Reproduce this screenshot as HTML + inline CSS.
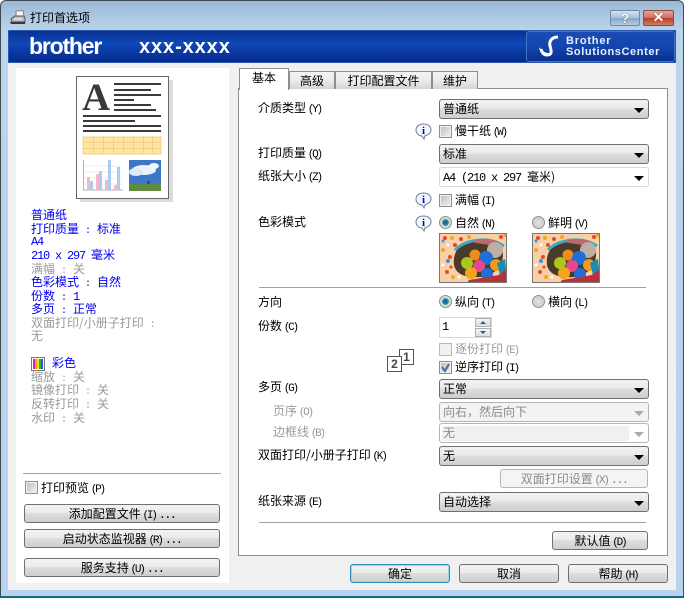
<!DOCTYPE html>
<html lang="zh"><head><meta charset="utf-8"><style>
html,body{margin:0;padding:0;background:#fff}
#w{position:relative;width:684px;height:598px;overflow:hidden;font-family:"WenQuanYi Zen Hei","Noto Sans CJK SC","Liberation Sans",sans-serif;font-size:12px;color:#000;background:#fff}
#w div,#w svg{position:absolute}
.t{white-space:nowrap;line-height:14px;height:14px}
.g{color:#9a9a9a}.b{color:#0000f0}
.k{font-family:"Liberation Mono",monospace;font-size:12px;letter-spacing:-1.2px}
.m{font-family:"Liberation Mono",monospace;font-size:11px;letter-spacing:-2.2px;margin-left:-1px}
.p{font-family:"Liberation Mono",monospace;font-size:10px;letter-spacing:0}
.dt{font-family:"Liberation Mono",monospace;font-size:12px;letter-spacing:-1.700px;margin-left:3px}
.c{height:18px;border:1px solid #707070;border-radius:3px;background:linear-gradient(#f2f2f2 0,#ebebeb 45%,#dddddd 50%,#cfcfcf 100%);box-sizing:content-box;width:208px;left:439px}
.c i{position:absolute;right:4px;top:8px;width:0;height:0;border:5px solid transparent;border-top:5px solid #000;border-bottom:0}
.c>span{position:absolute;left:3px;top:2px;line-height:14px;white-space:nowrap}
.c.d{border-color:#b5b5b5;background:#f3f3f3;color:#8a8a8a}.c.d i{border-top-color:#aaa}
.bt{border:1px solid #707070;border-radius:3px;background:linear-gradient(#f2f2f2 0,#ebebeb 45%,#dddddd 50%,#cfcfcf 100%);text-align:center;line-height:17px;white-space:nowrap;box-sizing:border-box}
.cb{width:13px;height:13px;box-sizing:border-box;border:1px solid #8e8f8f;background:linear-gradient(135deg,#bdbdbd,#f2f2f2);box-shadow:inset 0 0 0 1px #f0f0f0}
.r{width:13px;height:13px;box-sizing:border-box;border:1px solid #8e8f8f;border-radius:50%;background:radial-gradient(circle at 50% 50%,#e4e4e4,#cfcfcf 60%,#f4f4f4)}
.r.on{background:radial-gradient(circle,#0e5a80 0,#2a8fb0 40%,#dcdcdc 46%,#cfcfcf 100%)}
.tb{background:linear-gradient(#f4f4f4,#ebebeb 50%,#d4d4d4);border:1px solid #8e8f8f;border-bottom:0;box-sizing:border-box;text-align:center;line-height:17px;white-space:nowrap}
.hr{height:1px;background:#a0a0a0}
</style></head><body><div id="w">
<div style="left:0;top:0;width:684px;height:598px;box-sizing:border-box;border:1px solid #3d4a52;border-radius:6px 6px 0 0;border-bottom:2px solid #0d6f84;background:linear-gradient(#9cb9d6 0,#bcd4ec 30px,#b9d3ee 100%)"></div>
<div style="left:8px;top:30px;width:668px;height:560px;background:#f0f0f0"></div>

<svg style="left:9px;top:10px" width="18" height="16" viewBox="0 0 18 16"><path d="M7 1l7-.5 1 6-8 .5z" fill="#f4f4f4" stroke="#888"/><path d="M2 9l4-3h9l1 3v3H3z" fill="#b8b8b8" stroke="#555"/><path d="M1 12h15v2H2z" fill="#3a3a3a"/><path d="M5 9h8" stroke="#fff"/></svg>
<div class="t" style="left:30px;top:11px">打印首选项</div>
<div style="left:610px;top:10px;width:30px;height:16px;box-sizing:border-box;border:1px solid #6f8aa5;border-radius:2px;background:linear-gradient(#d5e3f1,#a9c2dc 48%,#86a6c6 52%,#b4cbe1);color:#fff;text-align:center;font:bold 14px/14px 'Liberation Sans',sans-serif;text-shadow:0 0 1px #222">?</div>
<div style="left:643px;top:10px;width:31px;height:16px;box-sizing:border-box;border:1px solid #8a4a40;border-radius:2px;background:linear-gradient(#e0a59a,#d0705f 48%,#b73f2c 52%,#d77a63);color:#fff;text-align:center;font:bold 14px/13px 'Liberation Sans',sans-serif;text-shadow:0 0 1px #422">✕</div>

<div style="left:8px;top:30px;width:668px;height:33px;box-sizing:border-box;border:1px solid #2a5ab0;background:linear-gradient(#0a3090 0,#0f49b8 40%,#0a3aa4 65%,#082a8c 100%)"></div>
<div class="t" style="left:29px;top:34px;height:24px;color:#fff;font:bold 23px/24px 'Liberation Sans',sans-serif;letter-spacing:-1.2px">brother</div>
<div class="t" style="left:139px;top:36px;height:22px;color:#fff;font:bold 20px/22px 'Liberation Sans',sans-serif;letter-spacing:.9px">xxx-xxxx</div>
<div style="left:526px;top:31px;width:149px;height:31px;box-sizing:border-box;border:1px solid #3f73c4;border-radius:3px;background:linear-gradient(#1a4cb4,#1446ae 50%,#0a2f90)"></div>
<svg style="left:538px;top:34px" width="26" height="24" viewBox="0 0 26 24"><path d="M20 3C13 3 11 8 12 12c1 4 3 9-3 9-3 0-5-2-6-6" fill="none" stroke="#fff" stroke-width="3"/><path d="M1 13c4 5 7 6 10 6l-2 3c-4 0-7-3-8-9z" fill="#fff"/></svg>
<div class="t" style="left:566px;top:34px;color:#e8f0fa;font:bold 11px/14px 'Liberation Sans',sans-serif;letter-spacing:.8px">Brother</div>
<div class="t" style="left:566px;top:45px;color:#e8f0fa;font:bold 11px/14px 'Liberation Sans',sans-serif;letter-spacing:.6px">SolutionsCenter</div>

<div style="left:16px;top:68px;width:213px;height:515px;background:#fff"></div>

<svg style="left:76px;top:76px" width="98" height="128" viewBox="0 0 98 128">
<rect x="4" y="4" width="93" height="122" fill="#dcdcdc"/><rect x=".5" y=".5" width="92" height="122" fill="#fff" stroke="#666"/>
<text x="6" y="34" font-family="Liberation Serif" font-weight="bold" font-size="39" fill="#3a3a3a">A</text>
<g fill="#3a3a3a"><rect x="38" y="7" width="47" height="2"/><rect x="38" y="13" width="37" height="2"/><rect x="38" y="18" width="47" height="2"/><rect x="38" y="23" width="20" height="2"/><rect x="38" y="28" width="37" height="2"/><rect x="38" y="33" width="42" height="2"/><rect x="7" y="39" width="78" height="2"/><rect x="7" y="44" width="52" height="2"/><rect x="7" y="49" width="78" height="2"/><rect x="7" y="54" width="78" height="2"/></g>
<rect x="7" y="61" width="78" height="17" fill="#fde5a6" stroke="#f5cf85"/>
<path d="M7 66.500h78M7 72.500h78M17.500 61v17M27.500 61v17M37.500 61v17M47.500 61v17M57.500 61v17M67.500 61v17M76.500 61v17" stroke="#f5cf85" fill="none"/>
<path d="M7.500 84v30H47" stroke="#b0b0b0" fill="none"/><path d="M8 90h38M8 96h38M8 102h38M8 108h38" stroke="#ececec"/>
<rect x="11" y="101" width="3" height="13" fill="#f7b6cc"/><rect x="14" y="105" width="3" height="9" fill="#a9cdf2"/><rect x="20" y="98" width="3" height="16" fill="#f7b6cc"/><rect x="23" y="95" width="3" height="19" fill="#a9cdf2"/><rect x="29" y="104" width="3" height="10" fill="#f7b6cc"/><rect x="32" y="84" width="3" height="30" fill="#a9cdf2"/><rect x="38" y="109" width="3" height="5" fill="#f7b6cc"/><rect x="41" y="91" width="3" height="23" fill="#a9cdf2"/>
<rect x="53" y="84" width="32" height="31" fill="#3e76c8"/><ellipse cx="68" cy="94" rx="12" ry="5" fill="#eaf3fb"/><ellipse cx="60" cy="96" rx="7" ry="4" fill="#dfeaf6"/><ellipse cx="78" cy="90" rx="5" ry="3" fill="#f4f8fc"/><rect x="53" y="107" width="32" height="8" fill="#5d8a3c"/><rect x="71" y="105" width="3" height="3" fill="#3f5c2c"/>
</svg>

<div class="t b" style="left:31px;top:208px">普通纸</div>
<div class="t b" style="left:31px;top:222px">打印质量<span class="p"> : </span>标准</div>
<div class="t b k" style="left:31px;top:235px">A4</div>
<div class="t b" style="left:31px;top:248px"><span class="k">210 x 297 </span>毫米</div>
<div class="t g" style="left:31px;top:262px">满幅<span class="p"> : </span>关</div>
<div class="t b" style="left:31px;top:275px">色彩模式<span class="p"> : </span>自然</div>
<div class="t b" style="left:31px;top:289px">份数<span class="p"> : </span><span class="k">1</span></div>
<div class="t b" style="left:31px;top:302px">多页<span class="p"> : </span>正常</div>
<div class="t g" style="left:31px;top:316px">双面打印/小册子打印<span class="p"> :</span></div>
<div class="t g" style="left:31px;top:329px">无</div>
<svg style="left:31px;top:357px" width="14" height="14" viewBox="0 0 14 14"><rect x=".5" y=".5" width="13" height="13" fill="#fff" stroke="#777"/><rect x="2" y="2" width="2" height="10" fill="#e020a0"/><rect x="4" y="2" width="2" height="10" fill="#f0a020"/><rect x="6" y="2" width="2" height="10" fill="#e8e020"/><rect x="8" y="2" width="2" height="10" fill="#30b040"/><rect x="10" y="2" width="2" height="10" fill="#2060e0"/></svg>
<div class="t b" style="left:52px;top:356px">彩色</div>
<div class="t g" style="left:31px;top:370px">缩放<span class="p"> : </span>关</div>
<div class="t g" style="left:31px;top:383px">镜像打印<span class="p"> : </span>关</div>
<div class="t g" style="left:31px;top:397px">反转打印<span class="p"> : </span>关</div>
<div class="t g" style="left:31px;top:411px">水印<span class="p"> : </span>关</div>

<div class="hr" style="left:23px;top:473px;width:198px"></div>
<div class="cb" style="left:25px;top:481px"></div>
<div class="t" style="left:41px;top:481px">打印预览 <span class="m">(P)</span></div>
<div class="bt" style="left:24px;top:504px;width:196px;height:19px">添加配置文件 <span class="m">(I)</span><span class="dt">...</span></div>
<div class="bt" style="left:24px;top:529px;width:196px;height:19px">启动状态监视器 <span class="m">(R)</span><span class="dt">...</span></div>
<div class="bt" style="left:24px;top:558px;width:196px;height:19px">服务支持 <span class="m">(U)</span><span class="dt">...</span></div>

<div style="left:238px;top:88px;width:430px;height:468px;box-sizing:border-box;border:1px solid #8e8f8f;background:#fff"></div>
<div class="tb" style="left:289px;top:71px;width:46px;height:18px">高级</div>
<div class="tb" style="left:335px;top:71px;width:97px;height:18px">打印配置文件</div>
<div class="tb" style="left:432px;top:71px;width:46px;height:18px">维护</div>
<div style="left:239px;top:68px;width:50px;height:22px;box-sizing:border-box;border:1px solid #8e8f8f;border-bottom:0;background:#fff;text-align:center;line-height:18px">基本</div>

<div class="t" style="left:258px;top:101px">介质类型 <span class="m">(Y)</span></div>
<div class="t" style="left:258px;top:146px">打印质量 <span class="m">(Q)</span></div>
<div class="t" style="left:258px;top:169px">纸张大小 <span class="m">(Z)</span></div>
<div class="t" style="left:258px;top:215px">色彩模式</div>
<div class="t" style="left:258px;top:295px">方向</div>
<div class="t" style="left:258px;top:319px">份数 <span class="m">(C)</span></div>
<div class="t" style="left:258px;top:380px">多页 <span class="m">(G)</span></div>
<div class="t g" style="left:273px;top:404px">页序 <span class="m">(O)</span></div>
<div class="t g" style="left:273px;top:425px">边框线 <span class="m">(B)</span></div>
<div class="t" style="left:258px;top:448px">双面打印/小册子打印 <span class="m">(K)</span></div>
<div class="t" style="left:258px;top:494px">纸张来源 <span class="m">(E)</span></div>

<div class="c" style="top:99px"><span>普通纸</span><i></i></div>
<svg style="left:415px;top:123px" width="17" height="18" viewBox="0 0 17 18"><path d="M8.500 1C4 1 1 3.500 1 7c0 3.500 3 6 6 6l2 3 1-3.200c3-.5 6-3 6-5.800 0-3.500-3-6-7.500-6z" fill="#f5f8fc" stroke="#6f7f95"/><text x="8.500" y="11" text-anchor="middle" font-family="Liberation Serif" font-weight="bold" font-size="11" fill="#0000e0">i</text></svg>
<div class="cb" style="left:439px;top:125px"></div>
<div class="t" style="left:455px;top:124px">慢干纸 <span class="m">(W)</span></div>
<div class="c" style="top:144px"><span>标准</span><i></i></div>
<div class="c" style="top:167px;border-color:#d9d9d9;background:#fff"><span><span class="k">A4 (210 x 297 </span>毫米)</span><i></i></div>

<svg style="left:415px;top:192px" width="17" height="18" viewBox="0 0 17 18"><path d="M8.500 1C4 1 1 3.500 1 7c0 3.500 3 6 6 6l2 3 1-3.200c3-.5 6-3 6-5.800 0-3.500-3-6-7.500-6z" fill="#f5f8fc" stroke="#6f7f95"/><text x="8.500" y="11" text-anchor="middle" font-family="Liberation Serif" font-weight="bold" font-size="11" fill="#0000e0">i</text></svg>
<div class="cb" style="left:439px;top:194px"></div>
<div class="t" style="left:455px;top:193px">满幅 <span class="m">(I)</span></div>
<svg style="left:415px;top:215px" width="17" height="18" viewBox="0 0 17 18"><path d="M8.500 1C4 1 1 3.500 1 7c0 3.500 3 6 6 6l2 3 1-3.200c3-.5 6-3 6-5.800 0-3.500-3-6-7.500-6z" fill="#f5f8fc" stroke="#6f7f95"/><text x="8.500" y="11" text-anchor="middle" font-family="Liberation Serif" font-weight="bold" font-size="11" fill="#0000e0">i</text></svg>
<div class="r on" style="left:439px;top:216px"></div>
<div class="t" style="left:455px;top:216px">自然 <span class="m">(N)</span></div>
<div class="r" style="left:532px;top:216px"></div>
<div class="t" style="left:548px;top:216px">鲜明 <span class="m">(V)</span></div>

<svg style="left:439px;top:233px" width="68" height="50" viewBox="0 0 68 50"><use href="#cand"/></svg>
<svg style="left:532px;top:233px" width="68" height="50" viewBox="0 0 68 50">
<defs><g id="cand"><rect width="68" height="50" fill="#f8cfa6"/>
<g fill="#e8472a"><circle cx="6" cy="5" r="2"/><circle cx="16" cy="12" r="2"/><circle cx="11" cy="24" r="2"/><circle cx="8" cy="39" r="2"/><circle cx="22" cy="6" r="2"/><circle cx="12" cy="34" r="1.500"/><circle cx="62" cy="4" r="2"/></g>
<g fill="#f2a51e"><circle cx="13" cy="5" r="2"/><circle cx="4" cy="17" r="2"/><circle cx="14" cy="44" r="2"/><circle cx="30" cy="4" r="2"/><circle cx="66" cy="2" r="2"/></g>
<g fill="#2b9bd8"><circle cx="9" cy="28" r="2"/><circle cx="19" cy="17" r="2"/><circle cx="4" cy="8" r="1.500"/></g>
<g fill="#fff"><circle cx="9" cy="12" r="1.500"/><circle cx="4" cy="32" r="1.500"/><circle cx="20" cy="44" r="1.500"/></g>
<path d="M15 32C13 16 25 7 42 6c13-1 22 4 22 15 0 12-8 21-22 23-14 1-25-2-27-12z" fill="#4a3a28"/>
<path d="M16 17C27 6 50 3 65 13" fill="none" stroke="#3fa8c8" stroke-width="3"/>
<path d="M31 9C40 5 52 5 60 9l-10 3z" fill="#b86a70"/>
<circle cx="56" cy="17" r="8" fill="#bcb0a4"/><circle cx="36" cy="22" r="5.500" fill="#ef8a1c"/>
<circle cx="47" cy="25" r="7" fill="#1f6fd8"/><circle cx="28" cy="30" r="6" fill="#a8c81c"/><circle cx="40" cy="33" r="6" fill="#e8488a"/><circle cx="57" cy="32" r="6" fill="#ef9a1c"/><circle cx="32" cy="40" r="6" fill="#f2a41c"/><circle cx="48" cy="41" r="6" fill="#1f6fd8"/>
<path d="M30 47l30-5 6-14 2 22H28z" fill="#b8323a"/><path d="M58 30l8-4 1 10-6 6z" fill="#1d8ab0"/>
<rect x=".5" y=".5" width="67" height="49" fill="none" stroke="#777"/></g></defs>
<use href="#cand"/></svg>

<div class="hr" style="left:259px;top:287px;width:387px"></div>
<div class="r on" style="left:439px;top:295px"></div>
<div class="t" style="left:455px;top:295px">纵向 <span class="m">(T)</span></div>
<div class="r" style="left:532px;top:295px"></div>
<div class="t" style="left:548px;top:295px">横向 <span class="m">(L)</span></div>

<div style="left:439px;top:317px;width:53px;height:21px;box-sizing:border-box;border:1px solid #d9d9d9;background:#fff"></div>
<div class="t k" style="left:442px;top:320px">1</div>
<div style="left:475px;top:318px;width:16px;height:9px;box-sizing:border-box;border:1px solid #b0b0b0;background:linear-gradient(#f4f4f4,#d8e0ea)"></div>
<div style="left:475px;top:328px;width:16px;height:9px;box-sizing:border-box;border:1px solid #b0b0b0;background:linear-gradient(#f4f4f4,#d8e0ea)"></div>
<svg style="left:475px;top:318px" width="16" height="19" viewBox="0 0 16 19"><path d="M5 6l3-3 3 3z" fill="#3a5a90"/><path d="M5 13l3 3 3-3z" fill="#3a5a90"/></svg>

<div style="left:399px;top:349px;width:15px;height:16px;box-sizing:border-box;border:1px solid #555;background:#fff;color:#444;font:bold 12px/14px 'Liberation Sans',sans-serif;text-align:center">1</div>
<div style="left:387px;top:356px;width:15px;height:16px;box-sizing:border-box;border:1px solid #555;background:#fff;color:#444;font:bold 12px/14px 'Liberation Sans',sans-serif;text-align:center">2</div>

<div class="cb" style="left:439px;top:343px;border-color:#b8b8b8;background:#f0f0f0"></div>
<div class="t g" style="left:455px;top:342px">逐份打印 <span class="m">(E)</span></div>
<div class="cb" style="left:439px;top:361px"></div>
<svg style="left:439px;top:361px" width="13" height="13" viewBox="0 0 13 13"><path d="M3 6l3 4 4-7" fill="none" stroke="#4a6a9c" stroke-width="2"/></svg>
<div class="t" style="left:455px;top:360px">逆序打印 <span class="m">(I)</span></div>

<div class="c" style="top:379px"><span>正常</span><i></i></div>
<div class="c d" style="top:402px"><span>向右，然后向下</span><i></i></div>
<div class="c d" style="top:423px;background:#fff"><div style="left:2px;top:2px;width:187px;height:15px;background:#f0f0f0"></div><span>无</span><i></i></div>
<div class="c" style="top:446px"><span>无</span><i></i></div>
<div class="bt" style="left:500px;top:469px;width:148px;height:19px;border-color:#b5b5b5;background:#f4f4f4;color:#8a8a8a">双面打印设置 <span class="m">(X)</span><span class="dt">...</span></div>
<div class="c" style="top:492px"><span>自动选择</span><i></i></div>
<div class="hr" style="left:259px;top:522px;width:387px"></div>
<div class="bt" style="left:552px;top:531px;width:96px;height:19px">默认值 <span class="m">(D)</span></div>

<div class="bt" style="left:350px;top:564px;width:100px;height:19px;border:1px solid #2c8fb8;box-shadow:inset 0 0 0 1px #9ad4ec">确定</div>
<div class="bt" style="left:459px;top:564px;width:100px;height:19px">取消</div>
<div class="bt" style="left:568px;top:564px;width:100px;height:19px">帮助 <span class="m">(H)</span></div>
</div></body></html>
